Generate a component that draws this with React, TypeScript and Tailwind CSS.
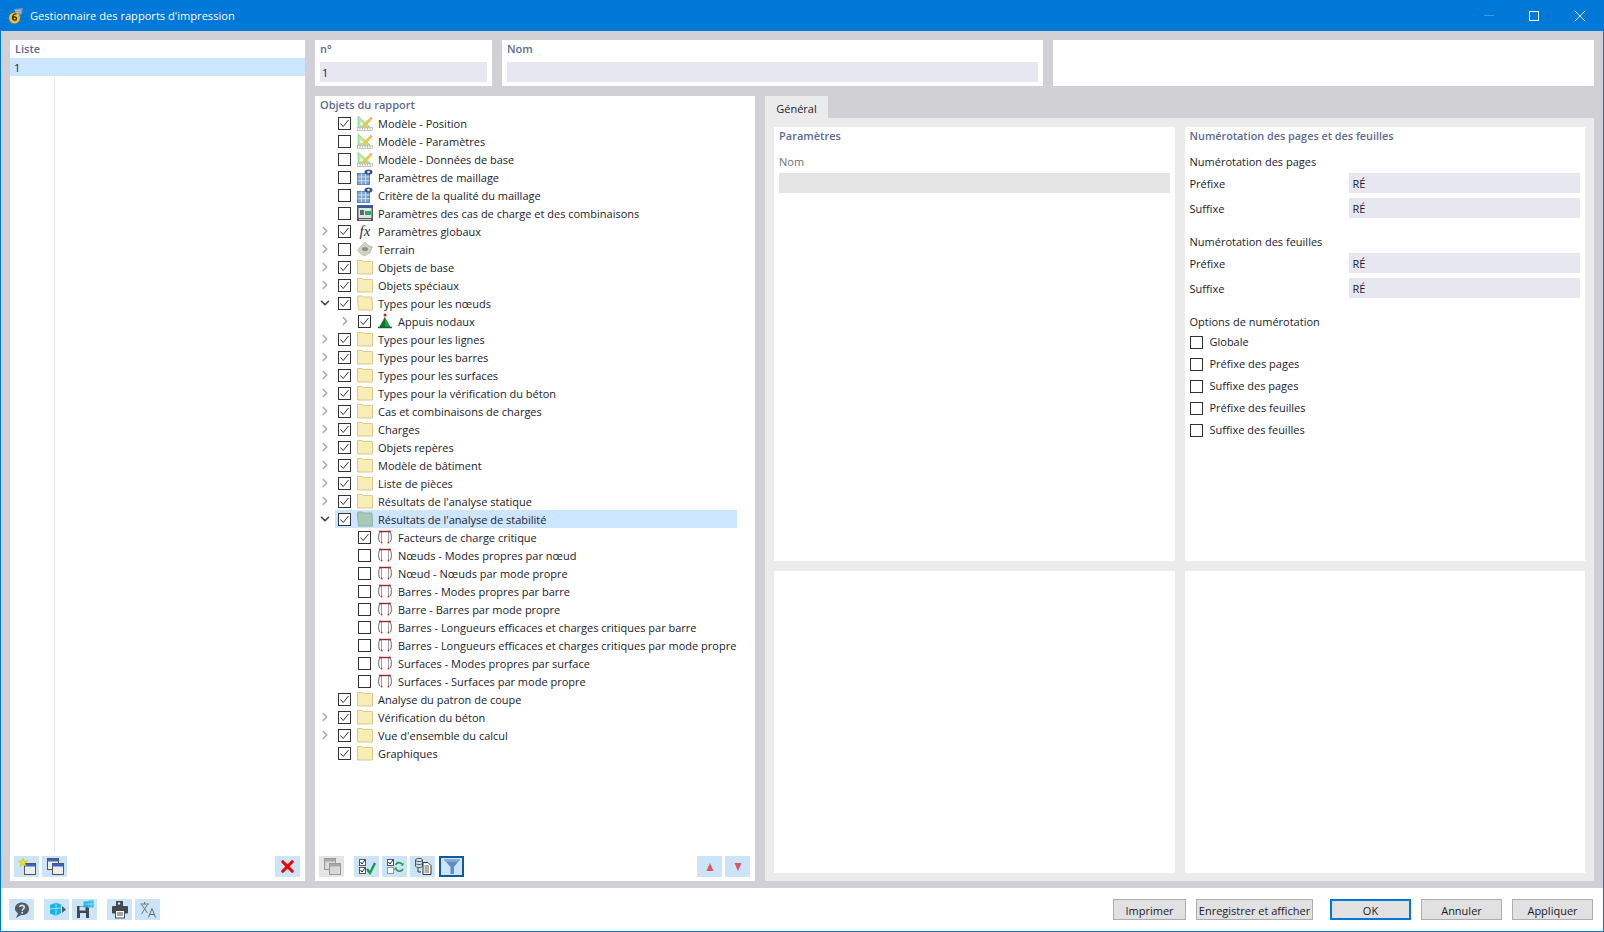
import React from "react";
import { ChevronRight, ChevronDown, X } from "lucide-react";

type Kind = "model" | "mesh" | "loads" | "fx" | "terrain" | "folder" | "folderOpen" | "folderSel" | "support" | "mode";

interface RowData {
  label: string;
  kind: Kind;
  checked?: boolean;
  arrow?: "right" | "down";
  child?: boolean;
  selected?: boolean;
}

const rows: RowData[] = [
  { label: "Modèle - Position", kind: "model", checked: true },
  { label: "Modèle - Paramètres", kind: "model" },
  { label: "Modèle - Données de base", kind: "model" },
  { label: "Paramètres de maillage", kind: "mesh" },
  { label: "Critère de la qualité du maillage", kind: "mesh" },
  { label: "Paramètres des cas de charge et des combinaisons", kind: "loads" },
  { label: "Paramètres globaux", kind: "fx", checked: true, arrow: "right" },
  { label: "Terrain", kind: "terrain", arrow: "right" },
  { label: "Objets de base", kind: "folder", checked: true, arrow: "right" },
  { label: "Objets spéciaux", kind: "folder", checked: true, arrow: "right" },
  { label: "Types pour les nœuds", kind: "folderOpen", checked: true, arrow: "down" },
  { label: "Appuis nodaux", kind: "support", checked: true, arrow: "right", child: true },
  { label: "Types pour les lignes", kind: "folder", checked: true, arrow: "right" },
  { label: "Types pour les barres", kind: "folder", checked: true, arrow: "right" },
  { label: "Types pour les surfaces", kind: "folder", checked: true, arrow: "right" },
  { label: "Types pour la vérification du béton", kind: "folder", checked: true, arrow: "right" },
  { label: "Cas et combinaisons de charges", kind: "folder", checked: true, arrow: "right" },
  { label: "Charges", kind: "folder", checked: true, arrow: "right" },
  { label: "Objets repères", kind: "folder", checked: true, arrow: "right" },
  { label: "Modèle de bâtiment", kind: "folder", checked: true, arrow: "right" },
  { label: "Liste de pièces", kind: "folder", checked: true, arrow: "right" },
  { label: "Résultats de l'analyse statique", kind: "folder", checked: true, arrow: "right" },
  { label: "Résultats de l'analyse de stabilité", kind: "folderSel", checked: true, arrow: "down", selected: true },
  { label: "Facteurs de charge critique", kind: "mode", checked: true, child: true },
  { label: "Nœuds - Modes propres par nœud", kind: "mode", child: true },
  { label: "Nœud - Nœuds par mode propre", kind: "mode", child: true },
  { label: "Barres - Modes propres par barre", kind: "mode", child: true },
  { label: "Barre - Barres par mode propre", kind: "mode", child: true },
  { label: "Barres - Longueurs efficaces et charges critiques par barre", kind: "mode", child: true },
  { label: "Barres - Longueurs efficaces et charges critiques par mode propre", kind: "mode", child: true },
  { label: "Surfaces - Modes propres par surface", kind: "mode", child: true },
  { label: "Surfaces - Surfaces par mode propre", kind: "mode", child: true },
  { label: "Analyse du patron de coupe", kind: "folder", checked: true },
  { label: "Vérification du béton", kind: "folder", checked: true, arrow: "right" },
  { label: "Vue d'ensemble du calcul", kind: "folder", checked: true, arrow: "right" },
  { label: "Graphiques", kind: "folder", checked: true },
];

const Checkbox = ({ checked }: { checked?: boolean }) => (
  <span className="flex h-[13px] w-[13px] shrink-0 items-center justify-center border border-[#333333] bg-white">
    {checked && (
      <svg width="11" height="11" viewBox="0 0 11 11">
        <path d="M1.5 5.5 L4.2 8.5 L9.5 2" fill="none" stroke="#333333" strokeWidth="1" />
      </svg>
    )}
  </span>
);

const TreeIcon = ({ kind }: { kind: Kind }) => {
  if (kind === "folder" || kind === "folderOpen" || kind === "folderSel") {
    const fill = kind === "folderSel" ? "#a9c9b8" : "#f8eeb4";
    const line = kind === "folderSel" ? "#8fb0a0" : "#d9c98a";
    return (
      <svg width="16" height="16" viewBox="0 0 16 16">
        <path
          d={kind === "folder" ? "M0.5 1.5 H5.5 L6.5 2.5 H15.5 V15 H0.5 Z" : "M0.5 3 L1 1 H5.5 L6.5 2 H15 L15.5 15 H1.5 Z"}
          fill={fill}
          stroke={line}
          strokeLinejoin="round"
        />
      </svg>
    );
  }
  if (kind === "model") {
    return (
      <svg width="16" height="16" viewBox="0 0 16 16">
        <path d="M1 1 V12 H13 Z" fill="#b6e8a8" stroke="#8fcc86" strokeWidth="0.7" />
        <path d="M3.5 6.5 V10 H7 Z" fill="#ffffff" />
        <path d="M6 9.5 L12.5 3 L14.5 5 L8 11.5 L5.5 12 Z" fill="#f2c63a" />
        <path d="M12.5 3 L13.8 1.4 L15.8 3.4 L14.5 5 Z" fill="#eaa6b4" />
        <rect x="0.5" y="12.5" width="15" height="3" fill="#f4f4ec" stroke="#a8a89c" strokeWidth="0.6" />
        <path d="M3 13 V14.5 M5.5 13 V14.5 M8 13 V14.5 M10.5 13 V14.5 M13 13 V14.5" stroke="#8a8a80" strokeWidth="0.6" />
      </svg>
    );
  }
  if (kind === "mesh") {
    return (
      <svg width="16" height="16" viewBox="0 0 16 16">
        <rect x="0.5" y="4.5" width="12" height="11" fill="#7da7d2" stroke="#4f6f98" strokeWidth="0.8" />
        <path d="M4.5 4.5 V15.5 M8.5 4.5 V15.5 M0.5 8 H12.5 M0.5 11.7 H12.5" stroke="#dfe9f5" strokeWidth="0.8" />
        <ellipse cx="11.5" cy="3" rx="4" ry="2.6" fill="#3d4f8a" />
        <circle cx="11.5" cy="3" r="1.3" fill="#e8ecf8" />
      </svg>
    );
  }
  if (kind === "loads") {
    return (
      <svg width="16" height="16" viewBox="0 0 16 16">
        <rect x="0" y="0" width="16" height="16" fill="#50585c" />
        <rect x="0" y="0" width="16" height="2" fill="#3a58b8" />
        <rect x="1.5" y="3" width="13" height="10" fill="#dfe6e0" />
        <rect x="3" y="5" width="4" height="5" fill="#5a6a70" />
        <rect x="8" y="6" width="6" height="4" fill="#20b060" />
        <path d="M2 14.5 H14" stroke="#c8d0d0" />
      </svg>
    );
  }
  if (kind === "fx") {
    return (
      <span className="flex h-4 w-4 items-center justify-center font-['Liberation_Serif',serif] text-[15px] italic leading-none text-[#333333]">
        fx
      </span>
    );
  }
  if (kind === "terrain") {
    return (
      <svg width="16" height="16" viewBox="0 0 16 16">
        <path d="M8 1 L11 4 L15.5 6 L13 12 L7 15 L3 12 L0.5 9 L4 5 Z" fill="#d2d0c4" stroke="#b4b2a6" strokeWidth="0.6" />
        <ellipse cx="8" cy="8" rx="3" ry="2" fill="#8f8f88" />
      </svg>
    );
  }
  if (kind === "support") {
    return (
      <svg width="16" height="16" viewBox="0 0 16 16">
        <circle cx="8" cy="2" r="1.5" fill="#d02020" />
        <path d="M8 4 L13.5 14 H2.5 Z" fill="#1f9a45" />
        <path d="M8 4 L8 14 H2.5 Z" fill="#127030" />
        <path d="M1 14.5 H15" stroke="#0d6a2c" strokeWidth="1.5" />
      </svg>
    );
  }
  return (
    <svg width="16" height="16" viewBox="0 0 16 16">
      <path d="M2.5 13 C1 9 1.5 5 3 2.5 M13 2.5 C14.5 5 15 9 13.5 13" fill="none" stroke="#5a5a5a" strokeWidth="0.9" />
      <path d="M4.5 3 V13 M11.5 3 V13" stroke="#8a8a8a" strokeWidth="0.8" />
      <path d="M3 2.5 H13" stroke="#8c2a30" strokeWidth="1.4" />
      <circle cx="3" cy="2.5" r="0.9" fill="#c02028" />
      <circle cx="13" cy="2.5" r="0.9" fill="#c02028" />
      <circle cx="4.5" cy="13.5" r="0.9" fill="#c02028" />
      <circle cx="11.5" cy="13.5" r="0.9" fill="#c02028" />
    </svg>
  );
};

const TreeRow = ({ row }: { row: RowData }) => (
  <div className="flex h-[18px] items-center">
    <span className={`flex shrink-0 justify-center ${row.child ? "w-[40px] pl-[20px]" : "w-[20px]"}`}>
      {row.arrow === "right" && <ChevronRight size={14} strokeWidth={2.5} className="text-[#a6a6a6]" />}
      {row.arrow === "down" && <ChevronDown size={14} strokeWidth={2.6} className="text-[#404040]" />}
    </span>
    <div className={`flex h-[18px] items-center ${row.selected ? "w-[402px] bg-[#cce6ff]" : ""}`}>
      <span className="ml-[3px]">
        <Checkbox checked={row.checked} />
      </span>
      <span className="ml-[6px] flex w-[21px] shrink-0">
        <TreeIcon kind={row.kind} />
      </span>
      <span className="whitespace-nowrap pt-[3px]">{row.label}</span>
    </div>
  </div>
);

const WindowGlyph = ({ x, y, grey }: { x: number; y: number; grey?: boolean }) => (
  <g transform={`translate(${x} ${y})`}>
    <rect x="0.5" y="0.5" width="11" height="11" fill={grey ? "#d8d8d8" : "#ececec"} stroke={grey ? "#9a9a9a" : "#555555"} />
    <rect x="1" y="1" width="10" height="2.5" fill={grey ? "#a8a8a8" : "#3c64c8"} />
  </g>
);

const IconButton = ({ children, tone = "blue", className = "" }: { children: React.ReactNode; tone?: "blue" | "grey" | "active"; className?: string }) => (
  <button
    className={`flex h-[21px] w-[25px] shrink-0 items-center justify-center ${
      tone === "grey" ? "bg-[#e5e5e5]" : tone === "active" ? "border-2 border-[#0f5a9c] bg-[#cce4f7]" : "bg-[#cce4f7]"
    } ${className}`}
  >
    {children}
  </button>
);

const Ic = ({ children }: { children: React.ReactNode }) => (
  <svg width="20" height="19" viewBox="0 0 20 19">
    {children}
  </svg>
);

const Field = ({ label, value }: { label: string; value: string }) => (
  <div className="flex h-[20px] items-center">
    <span className="w-[159px] shrink-0 pt-[3px]">{label}</span>
    <div className="flex h-[20px] flex-1 items-center bg-[#e7e7f1] pl-[4px] pt-[3px]">{value}</div>
  </div>
);

const Option = ({ label }: { label: string }) => (
  <div className="flex h-[22px] items-center gap-[7px]">
    <Checkbox />
    <span className="pt-px">{label}</span>
  </div>
);

const ActionButton = ({ label, className, primary }: { label: string; className: string; primary?: boolean }) => (
  <button
    className={`h-[21px] whitespace-nowrap bg-[#e1e1e1] pt-px leading-none ${className} ${
      primary ? "border-2 border-[#0078d7]" : "border border-[#adadad]"
    }`}
  >
    {label}
  </button>
);

export default function App() {
  return (
    <div className="flex h-[932px] w-[1604px] flex-col border border-t-0 border-[#0078d7] bg-white font-['Open_Sans',sans-serif] text-[11px] text-[#1b1b2b]">
      {/* Title bar */}
      <div className="flex h-[31px] shrink-0 items-center bg-[#0078d7] text-[11.1px] text-white">
        <svg className="ml-[7px]" width="16" height="16" viewBox="0 0 16 16">
          <path d="M6 1 L15 0 L14 6 L9 9 Z" fill="#7f93b8" />
          <path d="M7 3 L13 2 M7.5 5 L13 4" stroke="#c8d2e4" strokeWidth="0.8" />
          <circle cx="6.5" cy="10" r="5.5" fill="#f5c02c" />
          <path d="M8.5 6 C6 5.5 4.5 7.5 4.5 10 C4.5 12.5 8.5 13 8.5 10.5 C8.5 8.5 5.5 8.5 4.8 10" fill="none" stroke="#30302c" strokeWidth="1.4" />
        </svg>
        <span className="ml-[6px] pt-px">Gestionnaire des rapports d'impression</span>
        <div className="ml-auto flex items-center">
          <span className="mr-[35px] h-px w-[10px] bg-[#3f9be6]" />
          <span className="mr-[31px] h-[10px] w-[10px] border border-white" />
          <X size={20} strokeWidth={1} className="mr-[13px]" />
        </div>
      </div>

      {/* Main area */}
      <div className="flex min-h-0 flex-1 gap-[10px] bg-[#d1d0d5] pb-[7px] pl-[9px] pr-[9px] pt-[9px]">
        {/* Liste */}
        <div className="flex w-[295px] shrink-0 flex-col bg-white">
          <div className="h-[18px] pl-[5px] font-semibold leading-[18px] text-[#5d6b92]">Liste</div>
          <div className="flex h-[18px] items-center bg-[#cce6ff] pl-[4px] pt-[3px]">1</div>
          <div className="ml-[44px] flex-1 border-l border-[#e8e8ec]" />
          <div className="flex h-[29px] shrink-0 items-start pl-[4px] pr-[5px] pt-[4px]">
            <div className="flex gap-[3px]">
              <IconButton>
                <Ic>
                  <WindowGlyph x={7} y={6} />
                  <path d="M6 1 L7.2 4 L10.5 4 L8 6 L9 9.5 L6 7.5 L3 9.5 L4 6 L1.5 4 L4.8 4 Z" fill="#f5e020" stroke="#b8a810" strokeWidth="0.4" />
                </Ic>
              </IconButton>
              <IconButton>
                <Ic>
                  <WindowGlyph x={2} y={1} />
                  <WindowGlyph x={7} y={6} />
                </Ic>
              </IconButton>
            </div>
            <IconButton className="ml-auto">
              <X size={19} strokeWidth={4} className="text-[#f00000]" />
            </IconButton>
          </div>
        </div>

        <div className="flex min-w-0 flex-1 flex-col gap-[10px]">
          {/* Top row */}
          <div className="flex h-[46px] shrink-0 gap-[10px]">
            <div className="flex w-[177px] flex-col bg-white px-[5px]">
              <div className="h-[22px] font-semibold leading-[18px] text-[#5d6b92]">n°</div>
              <div className="flex h-[20px] items-center bg-[#e7e7f1] pl-[2px] pt-[2px]">1</div>
            </div>
            <div className="flex w-[541px] flex-col bg-white px-[5px]">
              <div className="h-[22px] font-semibold leading-[18px] text-[#5d6b92]">Nom</div>
              <div className="h-[20px] bg-[#e7e7f1]" />
            </div>
            <div className="flex-1 bg-white" />
          </div>

          <div className="flex min-h-0 flex-1 gap-[10px]">
            {/* Objets du rapport */}
            <div className="flex w-[440px] shrink-0 flex-col bg-white">
              <div className="h-[18px] pl-[5px] font-semibold leading-[18px] text-[#5d6b92]">Objets du rapport</div>
              <div className="min-h-0 flex-1">
                {rows.map((row) => (
                  <TreeRow key={row.label} row={row} />
                ))}
              </div>
              <div className="flex h-[25px] shrink-0 items-start pl-[4px] pr-[5px]">
                <IconButton tone="grey" className="mr-[10px]">
                  <Ic>
                    <WindowGlyph x={2} y={1} grey />
                    <WindowGlyph x={7} y={6} grey />
                  </Ic>
                </IconButton>
                <div className="flex gap-[3px]">
                  <IconButton>
                    <Ic>
                      <rect x="2.5" y="2.5" width="6" height="6" fill="#fff" stroke="#555" />
                      <rect x="2.5" y="10.5" width="6" height="6" fill="#fff" stroke="#555" />
                      <path d="M3.5 5 L5 7 L8 3 M3.5 13 L5 15 L8 11" fill="none" stroke="#222" />
                      <path d="M10 12 L13 16 L18 6" fill="none" stroke="#1c9a4a" strokeWidth="2.4" />
                    </Ic>
                  </IconButton>
                  <IconButton>
                    <Ic>
                      <rect x="2.5" y="2.5" width="6" height="6" fill="#fff" stroke="#555" />
                      <rect x="2.5" y="10.5" width="6" height="6" fill="#fff" stroke="#999" />
                      <path d="M3.5 5 L5 7 L8 3" fill="none" stroke="#222" />
                      <path d="M10.5 8 C12 5 15 5 17 7 M18 12 C16 15 13 15 11 12" fill="none" stroke="#1c9a4a" strokeWidth="1.6" />
                      <path d="M15.5 8.5 H18.5 V5.5 Z M12.5 10.5 H9.5 V13.5 Z" fill="#1c9a4a" />
                    </Ic>
                  </IconButton>
                  <IconButton>
                    <Ic>
                      <ellipse cx="6" cy="3" rx="3.5" ry="1.6" fill="#dfe5ea" stroke="#555" />
                      <path d="M2.5 3 V9 C2.5 11 9.5 11 9.5 9 V3 M2.5 6 C2.5 8 9.5 8 9.5 6" fill="none" stroke="#555" />
                      <path d="M5 11 V15 H8" fill="none" stroke="#333" />
                      <path d="M10 5.5 H15 L18 8.5 V17.5 H10 Z" fill="#fff" stroke="#333" />
                      <path d="M11.5 9 H16 M11.5 11 H16 M11.5 13 H16 M11.5 15 H16" stroke="#333" strokeWidth="0.8" />
                    </Ic>
                  </IconButton>
                  <IconButton tone="active" className="ml-px">
                    <Ic>
                      <path d="M2 2.5 H18 L12 10 V17 L8.5 17 V10 Z" fill="#5f8cc4" />
                      <path d="M2 2.5 H18 L16.5 5 H3.5 Z" fill="#85a6d2" />
                    </Ic>
                  </IconButton>
                </div>
                <div className="ml-auto flex gap-[3px]">
                  <IconButton>
                    <svg width="12" height="12" viewBox="0 0 12 12">
                      <path d="M6 2 L9.5 10 H2.5 Z" fill="#e2555f" />
                    </svg>
                  </IconButton>
                  <IconButton>
                    <svg width="12" height="12" viewBox="0 0 12 12">
                      <path d="M6 10 L9.5 2 H2.5 Z" fill="#e2555f" />
                    </svg>
                  </IconButton>
                </div>
              </div>
            </div>

            {/* Général */}
            <div className="flex min-w-0 flex-1 flex-col">
              <div className="flex h-[22px] w-[63px] shrink-0 items-center justify-center bg-[#ebebeb] pt-[5px]">Général</div>
              <div className="grid min-h-0 flex-1 grid-cols-2 grid-rows-[434fr_302fr] gap-[10px] bg-[#ebebeb] px-[9px] pb-[8px] pt-[9px]">
                <div className="bg-white px-[5px]">
                  <div className="h-[18px] font-semibold leading-[18px] text-[#5d6b92]">Paramètres</div>
                  <div className="mt-[8px] h-[20px] leading-[18px] text-[#6f6f6f]">Nom</div>
                  <div className="h-[20px] bg-[#e5e5e5]" />
                </div>
                <div className="bg-white px-[5px]">
                  <div className="h-[18px] text-[10.85px] font-semibold leading-[18px] text-[#5d6b92]">Numérotation des pages et des feuilles</div>
                  <div className="mt-[8px] h-[20px] leading-[18px]">Numérotation des pages</div>
                  <div className="flex flex-col gap-[5px]">
                    <Field label="Préfixe" value="RÉ" />
                    <Field label="Suffixe" value="RÉ" />
                  </div>
                  <div className="mt-[15px] h-[20px] leading-[18px]">Numérotation des feuilles</div>
                  <div className="flex flex-col gap-[5px]">
                    <Field label="Préfixe" value="RÉ" />
                    <Field label="Suffixe" value="RÉ" />
                  </div>
                  <div className="mt-[15px] h-[18px] leading-[18px]">Options de numérotation</div>
                  <Option label="Globale" />
                  <Option label="Préfixe des pages" />
                  <Option label="Suffixe des pages" />
                  <Option label="Préfixe des feuilles" />
                  <Option label="Suffixe des feuilles" />
                </div>
                <div className="bg-white" />
                <div className="bg-white" />
              </div>
            </div>
          </div>
        </div>
      </div>

      {/* Footer */}
      <div className="flex h-[43px] shrink-0 items-start pl-[9px] pr-[10px] pt-[11px]">
        <IconButton className="-ml-px">
          <svg width="18" height="18" viewBox="0 0 18 18">
            <path d="M9 1.5 C13.5 1.5 16 4.5 16 8 C16 12 12.5 14.5 8 14 L3 17 L5 12.5 C3 11 2 9.5 2 7.5 C2 4 5 1.5 9 1.5 Z" fill="#555a60" />
            <path d="M6.8 6 C7 3.8 11.3 3.8 11.3 6.3 C11.3 8 9.2 8 9.2 9.8" fill="none" stroke="#cce4f7" strokeWidth="1.6" />
            <circle cx="9.2" cy="11.8" r="1" fill="#cce4f7" />
          </svg>
        </IconButton>
        <div className="ml-[10px] flex gap-[3px]">
          <IconButton>
            <Ic>
              <path d="M3 5 L9 2.5 L14 4.5 V13 L9 16 L3 13.5 Z" fill="#19b4ea" />
              <path d="M9 2.5 V16 M3 9 L14 8" stroke="#cce4f7" strokeWidth="0.8" />
              <path d="M15 6 L19 9.5 L15 13 Z" fill="#555a60" />
            </Ic>
          </IconButton>
          <IconButton>
            <Ic>
              <path d="M2 6 H12 L14 8 V18 H2 Z" fill="#44484e" />
              <rect x="4.5" y="6.5" width="6" height="4" fill="#cce4f7" />
              <rect x="5" y="13" width="6" height="5" fill="#cce4f7" />
              <rect x="8.5" y="1.5" width="5" height="6" fill="#19b4ea" />
              <rect x="13.5" y="0.5" width="5" height="7" fill="#19b4ea" />
              <path d="M10 4 H18 M16 0.5 V7.5" stroke="#cce4f7" strokeWidth="0.7" />
            </Ic>
          </IconButton>
        </div>
        <div className="ml-[10px] flex gap-[3px]">
          <IconButton>
            <Ic>
              <path d="M6 1 H13 V6 H6 Z" fill="#44484e" />
              <rect x="2" y="6" width="16" height="7.5" rx="1" fill="#44484e" />
              <rect x="5.5" y="10.5" width="9" height="7.5" fill="#fff" stroke="#44484e" />
              <path d="M7 13 H13 M7 15 H13" stroke="#44484e" />
              <circle cx="9" cy="3.5" r="1.2" fill="#cce4f7" />
            </Ic>
          </IconButton>
          <IconButton>
            <Ic>
              <path d="M2.5 4 H11 M6.5 2 V4 M3.5 14 L9.5 4.5 M3.5 4.5 L9.5 13" fill="none" stroke="#666b72" strokeWidth="0.9" />
              <path d="M10.5 17.5 L14 8.5 L17.5 17.5 M11.8 14.5 H16.2" fill="none" stroke="#666b72" strokeWidth="1" />
            </Ic>
          </IconButton>
        </div>
        <div className="ml-auto flex gap-[10px]">
          <ActionButton label="Imprimer" className="w-[73px]" />
          <ActionButton label="Enregistrer et afficher" className="w-[117px]" />
          <ActionButton label="OK" className="ml-[7px] w-[81px]" primary />
          <ActionButton label="Annuler" className="w-[81px]" />
          <ActionButton label="Appliquer" className="w-[81px]" />
        </div>
      </div>
    </div>
  );
}
